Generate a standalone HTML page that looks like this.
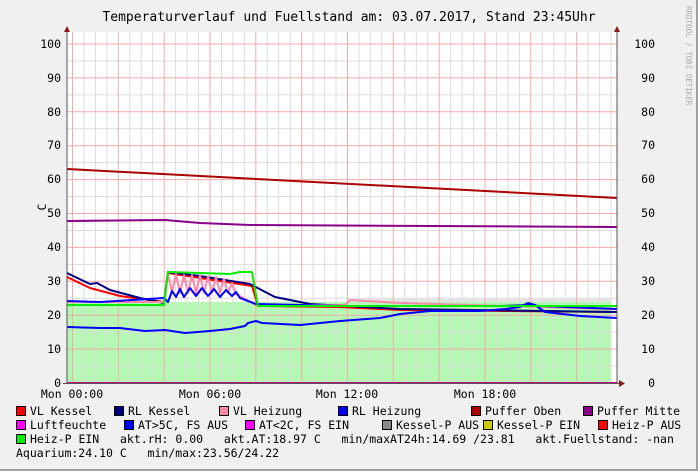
<!DOCTYPE html>
<html><head><meta charset="utf-8"><style>
html,body{margin:0;padding:0;background:#f0f0f0}
svg{display:block}
text{font-family:"DejaVu Sans Mono","Liberation Mono",monospace;font-size:11.5px;fill:#000}
</style></head><body>
<svg width="698" height="471" viewBox="0 0 698 471" xmlns="http://www.w3.org/2000/svg">
<rect x="0" y="0" width="698" height="471" fill="#f0f0f0"/>
<rect x="696" y="0" width="2" height="471" fill="#a0a0a0"/>
<rect x="0" y="469" width="698" height="2" fill="#a0a0a0"/>
<rect x="67" y="32" width="550" height="351" fill="#fff"/>
<rect x="67" y="302" width="544" height="81" fill="#b4f8b4"/>
<rect x="350" y="299" width="261" height="3" fill="#e4e4e4"/>
<path stroke="#dcdcdc" stroke-width="1" fill="none" d="M84,32V383M95.4,32V383M106.9,32V383M129.8,32V383M141.2,32V383M152.7,32V383M175.6,32V383M187.1,32V383M198.5,32V383M221.5,32V383M232.9,32V383M244.4,32V383M267.3,32V383M278.7,32V383M290.2,32V383M313.1,32V383M324.6,32V383M336,32V383M359,32V383M370.4,32V383M381.9,32V383M404.8,32V383M416.3,32V383M427.7,32V383M450.6,32V383M462.1,32V383M473.5,32V383M496.5,32V383M507.9,32V383M519.4,32V383M542.3,32V383M553.8,32V383M565.2,32V383M588.1,32V383M599.6,32V383M611,32V383M67,366.05H617M67,332.15H617M67,298.25H617M67,264.35H617M67,230.45H617M67,196.55H617M67,162.65H617M67,128.75H617M67,94.85H617M67,61H617"/>
<path stroke="#f2aaaa" stroke-width="1" fill="none" d="M72.5,32V383M118.3,32V383M164.2,32V383M210,32V383M255.8,32V383M301.7,32V383M347.5,32V383M393.3,32V383M439.2,32V383M485,32V383M530.8,32V383M576.7,32V383M67,349.1H617M67,315.2H617M67,281.3H617M67,247.4H617M67,213.5H617M67,179.6H617M67,145.7H617M67,111.8H617M67,77.9H617M67,44H617"/>
<g fill="none" stroke-width="2" stroke-linejoin="round">
<polyline stroke="#aa0000" points="67,169 617,198"/>
<polyline stroke="#880088" points="67,221 165,220 200,223 250,225 617,227"/>
<polyline stroke="#ff0000" points="67,277 90,288 120,296 164,302 168,273 200,278 252,286 258,306 340,307 400,310 617,312"/>
<polyline stroke="#000080" points="67,273 90,284 97,283 110,290 140,298 164,303 168,272 200,276 250,284 275,297 310,304 345,306 400,309 617,312"/>
<polyline stroke="#ff88aa" points="67,302 164,302 168,275 172,292 176,274 180,293 184,275 188,293 192,275 196,293 200,275 204,293 208,276 212,293 216,277 220,293 224,279 228,293 232,283 236,294 256,305 345,305 350,300 400,303 617,309"/>
<polyline stroke="#0000ff" points="67,301 100,302 164,298 168,302 172,291 176,297 180,289 184,297 190,288 196,296 202,288 208,296 214,289 220,297 226,290 232,296 236,292 240,298 256,304 345,306 500,306 530,305 540,306 617,309"/>
<polyline stroke="#0000ff" points="67,327 100,328 120,328 145,331 165,330 185,333 210,331 230,329 245,326 248,323 256,321 262,323 300,325 340,321 380,318 400,314 430,311 480,311 505,309 520,307 528,303 535,305 545,312 580,316 617,318"/>
<polyline stroke="#00ee00" points="67,305 164,305 168,272 200,273 230,274 240,272 252,272 258,306 617,306"/>
<polyline stroke="#cc0088" points="67,383 617,383"/>
</g>
<line x1="67" y1="28" x2="67" y2="384" stroke="#555" stroke-width="1"/>
<line x1="617" y1="28" x2="617" y2="384" stroke="#555" stroke-width="1"/>
<line x1="63" y1="383.5" x2="620" y2="383.5" stroke="#555" stroke-width="1"/>
<polygon points="64,32 70,32 67,26" fill="#8b1a1a"/>
<polygon points="614,32 620,32 617,26" fill="#8b1a1a"/>
<polygon points="619,380 625,383.5 619,387" fill="#8b1a1a"/>
<g text-anchor="end">
<text x="61" y="48">100</text><text x="61" y="82">90</text><text x="61" y="116">80</text><text x="61" y="149">70</text><text x="61" y="183">60</text><text x="61" y="217">50</text><text x="61" y="251">40</text><text x="61" y="285">30</text><text x="61" y="319">20</text><text x="61" y="353">10</text><text x="61" y="387">0</text>
<text x="655" y="48">100</text><text x="655" y="82">90</text><text x="655" y="116">80</text><text x="655" y="149">70</text><text x="655" y="183">60</text><text x="655" y="217">50</text><text x="655" y="251">40</text><text x="655" y="285">30</text><text x="655" y="319">20</text><text x="655" y="353">10</text><text x="655" y="387">0</text>
</g>
<g text-anchor="middle">
<text x="72" y="398">Mon 00:00</text><text x="210" y="398">Mon 06:00</text><text x="347" y="398">Mon 12:00</text><text x="485" y="398">Mon 18:00</text>
<text x="349" y="21" style="font-size:13px">Temperaturverlauf und Fuellstand am: 03.07.2017, Stand 23:45Uhr</text>
</g>
<text x="46" y="207" transform="rotate(-90 46 207)" text-anchor="middle">C</text>
<text x="686" y="6" transform="rotate(90 686 6)" style="font-size:7.5px;fill:#aaa">RRDTOOL / TOBI OETIKER</text>
<g stroke="#000" stroke-width="1">
<rect x="16.5" y="406.5" width="9" height="9" fill="#ff0000"/>
<rect x="114.5" y="406.5" width="9" height="9" fill="#000080"/>
<rect x="219.5" y="406.5" width="9" height="9" fill="#ff88aa"/>
<rect x="338.5" y="406.5" width="9" height="9" fill="#0000ff"/>
<rect x="471.5" y="406.5" width="9" height="9" fill="#aa0000"/>
<rect x="583.5" y="406.5" width="9" height="9" fill="#880088"/>
<rect x="16.5" y="420.5" width="9" height="9" fill="#ff00ff"/>
<rect x="124.5" y="420.5" width="9" height="9" fill="#0000ff"/>
<rect x="245.5" y="420.5" width="9" height="9" fill="#ff00ff"/>
<rect x="382.5" y="420.5" width="9" height="9" fill="#888888"/>
<rect x="483.5" y="420.5" width="9" height="9" fill="#cccc00"/>
<rect x="598.5" y="420.5" width="9" height="9" fill="#ff0000"/>
<rect x="16.5" y="434.5" width="9" height="9" fill="#00ee00"/>
</g>
<text x="30" y="415">VL Kessel</text>
<text x="128" y="415">RL Kessel</text>
<text x="233" y="415">VL Heizung</text>
<text x="352" y="415">RL Heizung</text>
<text x="485" y="415">Puffer Oben</text>
<text x="597" y="415">Puffer Mitte</text>
<text x="30" y="429">Luftfeuchte</text>
<text x="138" y="429">AT&gt;5C, FS AUS</text>
<text x="259" y="429">AT&lt;2C, FS EIN</text>
<text x="396" y="429">Kessel-P AUS</text>
<text x="497" y="429">Kessel-P EIN</text>
<text x="612" y="429">Heiz-P AUS</text>
<text x="30" y="443" xml:space="preserve">Heiz-P EIN   akt.rH: 0.00   akt.AT:18.97 C   min/maxAT24h:14.69 /23.81   akt.Fuellstand: -nan</text>
<text x="16" y="457" xml:space="preserve">Aquarium:24.10 C   min/max:23.56/24.22</text>
</svg>
</body></html>
